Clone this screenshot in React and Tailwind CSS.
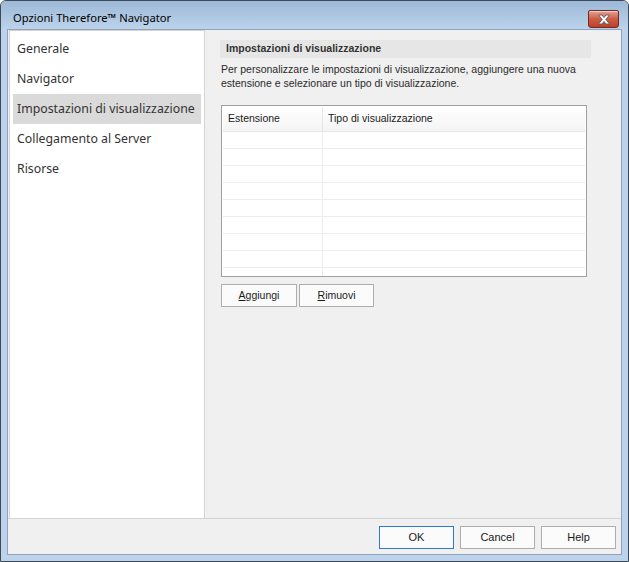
import React from 'react'

const ui = { fontFamily: '"Segoe UI", "Noto Sans", "Open Sans", sans-serif' }
const tahoma = { fontFamily: 'Tahoma, "Liberation Sans", Arial, sans-serif' }

const navItems = [
  'Generale',
  'Navigator',
  'Impostazioni di visualizzazione',
  'Collegamento al Server',
  'Risorse',
]

function CloseButton() {
  return (
    <div className="mr-[9px] mt-[9px] flex h-[18px] w-[31px] items-center justify-center rounded-b-[3px] rounded-t-[2px] border border-[#6e2a22] bg-gradient-to-b from-[#e3a193] via-[#cf5b45] to-[#bf3f2a] shadow-[inset_0_1px_0_rgba(255,255,255,0.5)]">
      <svg width="14" height="11" viewBox="0 0 14 11">
        <path
          d="M1.5 1 H5 L7 3.6 L9 1 H12.5 L8.8 5.5 L12.5 10 H9 L7 7.4 L5 10 H1.5 L5.2 5.5 Z"
          fill="#ffffff"
          stroke="#5a5a5a"
          strokeWidth="0.9"
          strokeLinejoin="round"
        />
      </svg>
    </div>
  )
}

function WinButton({ children, primary }) {
  return (
    <button
      className={
        'flex h-[23px] w-[75px] items-center justify-center border bg-[#fbfbfb] text-[11px] text-[#1a1a1a] ' +
        (primary ? 'border-[#2f7bd0]' : 'border-[#adadad]')
      }
      style={tahoma}
    >
      {children}
    </button>
  )
}

function App() {
  const rows = Array.from({ length: 9 })

  return (
    <div className="h-[562px] w-[629px] overflow-hidden bg-white">
      <div className="flex h-[562px] w-[629px] flex-col rounded-t-[6px] border border-[#3c4a58] bg-[#bcd3eb]">
        {/* title bar */}
        <div className="flex h-[28px] shrink-0 items-start justify-between rounded-t-[5px] bg-gradient-to-b from-[#9db9d7] to-[#bcd3eb]">
          <span className="ml-[12px] mt-[9px] whitespace-nowrap text-[11.2px] leading-[16px] text-black" style={ui}>
            Opzioni Therefore™ Navigator
          </span>
          <CloseButton />
        </div>

        {/* client area */}
        <div className="mx-[6px] mb-[6px] flex flex-1 flex-col border border-[#8ea3bb] bg-[#f0f0f0]">
          <div className="flex h-[488px]">
            {/* sidebar */}
            <div className="ml-[1px] flex w-[196px] flex-col border-x border-t border-[#d4d4d4] bg-white px-[3px] pt-[3px]" style={ui}>
              {navItems.map((item, i) => (
                <div
                  key={item}
                  className={
                    'flex h-[30px] items-center whitespace-nowrap pl-[4px] text-[12.3px] text-[#333333] ' +
                    (i === 2 ? 'bg-[#dadada]' : '')
                  }
                >
                  {item}
                </div>
              ))}
            </div>

            {/* right panel */}
            <div className="flex flex-1 flex-col pl-[15px] pt-[10px]" style={tahoma}>
              <div className="flex h-[18px] w-[371px] items-center bg-[#e6e6e6] pl-[6px] text-[10.5px] font-bold text-[#333333]">
                Impostazioni di visualizzazione
              </div>
              <p className="ml-[1px] mt-[4px] w-[370px] text-[10.5px] leading-[14px] text-[#2a2a2a]">
                Per personalizzare le impostazioni di visualizzazione, aggiungere una nuova estensione e selezionare un tipo di visualizzazione.
              </p>

              {/* table */}
              <div className="ml-[1px] mt-[15px] h-[172px] w-[366px] overflow-hidden border border-[#a0a0a0] bg-white p-[1px]">
                <div className="flex h-[25px] border-b border-[#e5e5e5] bg-gradient-to-b from-white to-[#f4f4f4] text-[10.5px] text-[#1a1a1a]">
                  <div className="flex w-[100px] items-center border-r border-[#e5e5e5] pl-[5px]">Estensione</div>
                  <div className="flex flex-1 items-center pl-[5px]">Tipo di visualizzazione</div>
                </div>
                {rows.map((_, i) => (
                  <div key={i} className="flex h-[17px] border-b border-[#ededed]">
                    <div className="w-[100px] border-r border-[#ededed]" />
                    <div className="flex-1" />
                  </div>
                ))}
              </div>

              <div className="ml-[1px] mt-[7px] flex gap-[2px]">
                <button className="flex h-[23px] w-[76px] items-center justify-center border border-[#adadad] bg-[#fbfbfb] text-[10.5px] text-[#1a1a1a]">
                  <span><span className="underline">A</span>ggiungi</span>
                </button>
                <button className="flex h-[23px] w-[75px] items-center justify-center border border-[#adadad] bg-[#fbfbfb] text-[10.5px] text-[#1a1a1a]">
                  <span><span className="underline">R</span>imuovi</span>
                </button>
              </div>
            </div>
          </div>

          {/* footer */}
          <div className="flex flex-1 items-start justify-end gap-[6px] border-t border-[#d4d4d4] pr-[5px] pt-[7px]">
            <WinButton primary>OK</WinButton>
            <WinButton>Cancel</WinButton>
            <WinButton>Help</WinButton>
          </div>
        </div>
      </div>
    </div>
  )
}

export default App
